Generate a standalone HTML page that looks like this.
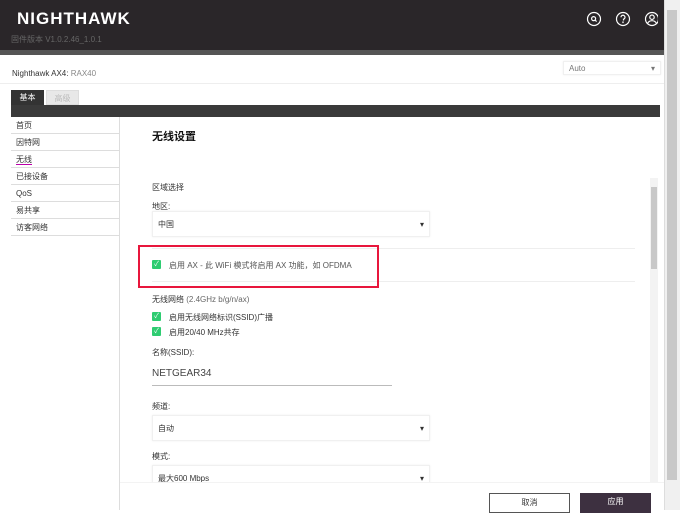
<!DOCTYPE html><html><head><meta charset="utf-8"><style>
*{margin:0;padding:0;box-sizing:border-box}
body{width:680px;height:510px;overflow:hidden;position:relative;background:#fff;font-family:"Liberation Sans","Noto Sans CJK SC",sans-serif;font-size:8px;color:#333}
.a{position:absolute}
.sel{position:absolute;background:#fff;border:1px solid #f0f0f0;box-shadow:0 0 2px #eee;font-size:8px;padding-left:5px}
.sel:after{content:"▾";position:absolute;right:5px;top:0;font-size:8px}
.cb{position:absolute;width:9px;height:9px;background:#2ecc71;border-radius:1px;color:#fff;font-size:7px;line-height:9px;text-align:center}
.side div{height:17px;border-bottom:1px solid #ddd;padding-left:5px;line-height:17px;font-size:8px}
</style></head><body>
<div class="a" style="left:0;top:0;width:664px;height:50px;background:#2a2629"></div>
<div class="a" style="left:0;top:50px;width:664px;height:5px;background:#555"></div>
<div class="a" style="left:17px;top:9px;color:#fff;font-size:17px;font-weight:bold;letter-spacing:1px">NIGHTHAWK</div>
<div class="a" style="left:11px;top:34px;color:#666;font-size:8px">固件版本 V1.0.2.46_1.0.1</div>
<svg class="a" style="left:586px;top:11px" width="72" height="16" viewBox="0 0 72 16" fill="none" stroke="#fff" stroke-width="1.2">
<circle cx="8" cy="8" r="6.5"/><circle cx="7.6" cy="7.6" r="2"/><path d="M9 9l1.6 1.6"/>
<circle cx="37" cy="8" r="6.5"/><path d="M35 6.3a2 2 0 1 1 2.5 1.9v1.3"/><circle cx="37" cy="11.3" r=".3"/>
<circle cx="66" cy="8" r="6.5"/><circle cx="66" cy="6.2" r="2.2"/><path d="M61.5 12.5a5 5 0 0 1 9 0"/></svg>
<div class="a" style="left:664px;top:0;width:16px;height:510px;background:#f0f0f0;border-left:1px solid #ddd"></div>
<div class="a" style="left:667px;top:10px;width:10px;height:470px;background:#c8c8c8"></div>
<div class="a" style="left:12px;top:69px;font-size:8px">Nighthawk AX4: <span style="color:#888">RAX40</span></div>
<div class="sel" style="left:563px;top:61px;width:98px;height:14px;line-height:14px;color:#777">Auto</div>
<div class="a" style="left:0;top:83px;width:664px;height:1px;background:#eee"></div>
<div class="a" style="left:11px;top:90px;width:33px;height:16px;background:#333;color:#fff;text-align:center;line-height:16px">基本</div>
<div class="a" style="left:46px;top:90px;width:33px;height:15px;background:#e8e8e8;color:#bbb;text-align:center;line-height:15px;border:1px solid #ddd">高级</div>
<div class="a" style="left:11px;top:105px;width:649px;height:12px;background:#3a3a3a"></div>
<div class="a side" style="left:11px;top:117px;width:108px">
<div>首页</div><div>因特网</div><div><span style="border-bottom:1px solid #b0a">无线</span></div><div>已接设备</div><div>QoS</div><div>易共享</div><div>访客网络</div></div>
<div class="a" style="left:119px;top:117px;width:1px;height:393px;background:#ddd"></div>
<div class="a" style="left:152px;top:128px;font-size:11px;font-weight:bold;color:#111">无线设置</div>
<div class="a" style="left:650px;top:178px;width:8px;height:305px;background:#f3f3f3"></div>
<div class="a" style="left:651px;top:187px;width:6px;height:82px;background:#c8c8c8"></div>
<div class="a" style="left:152px;top:182px">区域选择</div>
<div class="a" style="left:152px;top:201px">地区:</div>
<div class="sel" style="left:152px;top:211px;width:278px;height:26px;line-height:26px">中国</div>
<div class="a" style="left:152px;top:248px;width:483px;height:1px;background:#eee"></div>
<div class="a" style="left:152px;top:281px;width:483px;height:1px;background:#eee"></div>
<div class="a" style="left:138px;top:245px;width:241px;height:43px;border:2px solid #e8163c"></div>
<div class="cb" style="left:152px;top:260px">✓</div>
<div class="a" style="left:169px;top:260px;color:#555">启用 AX - 此 WiFi 模式将启用 AX 功能，如 OFDMA</div>
<div class="a" style="left:152px;top:294px">无线网络 <span style="color:#666">(2.4GHz b/g/n/ax)</span></div>
<div class="cb" style="left:152px;top:312px">✓</div>
<div class="a" style="left:169px;top:312px">启用无线网络标识(SSID)广播</div>
<div class="cb" style="left:152px;top:327px">✓</div>
<div class="a" style="left:169px;top:327px">启用20/40 MHz共存</div>
<div class="a" style="left:152px;top:347px">名称(SSID):</div>
<div class="a" style="left:152px;top:368px;font-size:10px;color:#444">NETGEAR34</div>
<div class="a" style="left:152px;top:385px;width:240px;height:1px;background:#bbb"></div>
<div class="a" style="left:152px;top:401px">频道:</div>
<div class="sel" style="left:152px;top:415px;width:278px;height:26px;line-height:26px">自动</div>
<div class="a" style="left:152px;top:451px">模式:</div>
<div class="sel" style="left:152px;top:465px;width:278px;height:20px;line-height:26px">最大600 Mbps</div>
<div class="a" style="left:120px;top:482px;width:544px;height:28px;background:#fff;border-top:1px solid #f3f3f3"></div>
<div class="a" style="left:489px;top:493px;width:81px;height:20px;border:1px solid #555;text-align:center;line-height:18px">取消</div>
<div class="a" style="left:580px;top:493px;width:71px;height:20px;background:#3d3040;color:#fff;text-align:center;line-height:18px">应用</div>
</body></html>
